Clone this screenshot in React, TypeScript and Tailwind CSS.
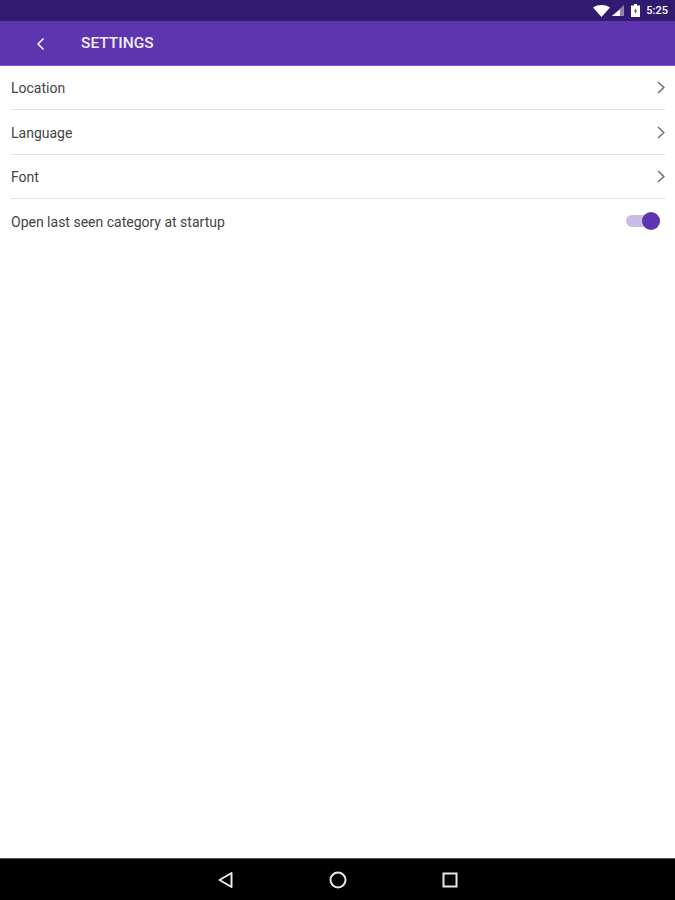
import { useState } from "react"

const items = ["Location", "Language", "Font"]

const Chevron = () => (
  <svg width="8" height="13" viewBox="0 0 8 13" fill="none" stroke="#6e6e6e" strokeWidth="1.5">
    <path d="M1 1 L6.8 6.5 L1 12" />
  </svg>
)

const App = () => {
  const [openLast, setOpenLast] = useState(true)

  return (
    <div className="h-[900px] w-[675px] flex flex-col bg-white font-['Roboto',sans-serif] overflow-hidden">
      {/* Status bar */}
      <div className="h-[21px] bg-[#311b6f] flex items-center justify-end pr-[7px]">
        <svg width="17" height="12" viewBox="0 0 17 12" className="mr-[1px]">
          <path d="M0 2.5 C5 -0.8 12 -0.8 17 2.5 L8.5 12 Z" fill="#ffffff" />
        </svg>
        <svg width="12" height="11" viewBox="0 0 12 11" className="ml-[1px]">
          <path d="M12 0 V11 H0 Z" fill="#ffffff" fillOpacity="0.45" />
          <path d="M8 4.5 V11 H0 Z" fill="#ffffff" />
        </svg>
        <svg width="9" height="13" viewBox="0 0 9 13" className="ml-[7px]">
          <path d="M3 0 H6 V1.5 H9 V13 H0 V1.5 H3 Z" fill="#ffffff" />
          <path d="M5 4 L3 7.5 H4.5 L4 10 L6 6.5 H4.5 Z" fill="#311b6f" />
        </svg>
        <span className="ml-[6px] text-[11px] leading-none font-medium text-white">5:25</span>
      </div>

      {/* Header */}
      <div className="h-[45px] bg-[#5e35b1] flex items-center shrink-0 border-b border-[#7e57c2]">
        <svg width="9" height="14" viewBox="0 0 9 14" fill="none" stroke="#ffffff" strokeWidth="1.5" className="ml-[36px] mt-[1px]">
          <path d="M7.5 1.5 L2 7 L7.5 12.5" />
        </svg>
        <h1 className="ml-[36px] pt-[2px] text-[15.5px] font-medium text-[#f1ecfa]">SETTINGS</h1>
      </div>

      {/* Settings list */}
      <div className="flex-1 px-[10px] pl-[11px]">
        {items.map((item) => (
          <div key={item} className="h-[44.4px] flex items-center justify-between border-b border-[#e2e2e2]">
            <span className="pt-[2px] text-[14px] text-[#444444]">{item}</span>
            <Chevron />
          </div>
        ))}
        <div className="h-[44px] flex items-center justify-between">
          <span className="pt-[2px] text-[14px] text-[#444444]">Open last seen category at startup</span>
          <button
            onClick={() => setOpenLast(!openLast)}
            className="relative w-[34px] h-[20px] mr-[5px] flex items-center"
          >
            <span className={`block w-full h-[12px] rounded-full ${openLast ? "bg-[#c9bce6]" : "bg-gray-300"}`} />
            <span
              className={`absolute top-[1px] w-[18px] h-[18px] rounded-full ${openLast ? "right-0 bg-[#5e35b1]" : "left-0 bg-gray-100"}`}
            />
          </button>
        </div>
      </div>

      {/* Nav bar */}
      <div className="h-[42px] bg-black flex items-center justify-center gap-[95px] border-t border-[#555555] shrink-0">
        <svg width="17" height="18" viewBox="0 0 17 18" fill="none" stroke="#e8e8e8" strokeWidth="2">
          <path d="M14.5 2 V16 L2.5 9 Z" strokeLinejoin="round" />
        </svg>
        <svg width="18" height="18" viewBox="0 0 18 18" fill="none" stroke="#e8e8e8" strokeWidth="2">
          <circle cx="9" cy="9" r="7.5" />
        </svg>
        <svg width="16" height="16" viewBox="0 0 16 16" fill="none" stroke="#e8e8e8" strokeWidth="2">
          <rect x="1.5" y="1.5" width="13" height="13" />
        </svg>
      </div>
    </div>
  )
}

export default App
